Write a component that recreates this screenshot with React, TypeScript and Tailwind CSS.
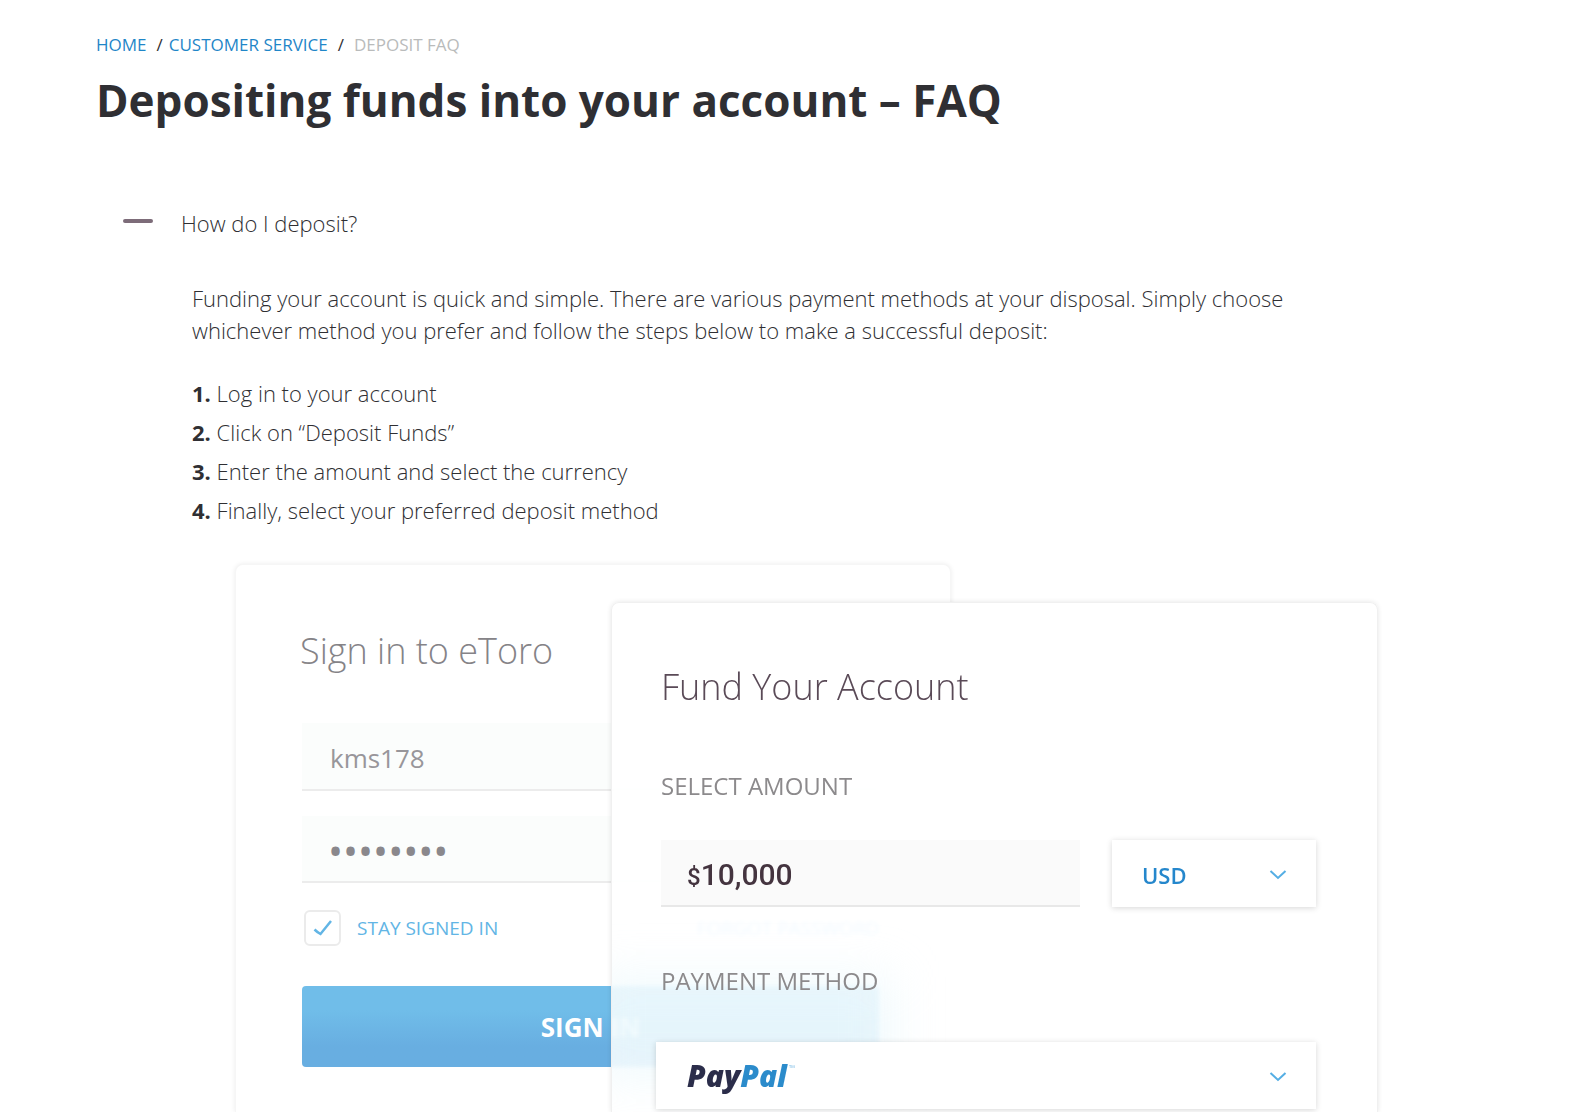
import { useState } from 'react'

const steps = [
  'Log in to your account',
  'Click on “Deposit Funds”',
  'Enter the amount and select the currency',
  'Finally, select your preferred deposit method',
]

function Chevron() {
  return (
    <svg
      className="pointer-events-none absolute top-1/2 right-[29px] -mt-1 h-[10px] w-[18px]"
      viewBox="0 0 18 10"
      fill="none"
      stroke="#55aee4"
      strokeWidth="2"
      aria-hidden="true"
    >
      <path d="M1.5 1 L9 8 L16.5 1" />
    </svg>
  )
}

function SignInCard() {
  return (
    <form className="col-start-1 col-end-3 row-start-1 rounded-t-lg border border-b-0 border-[#f6f6f6] bg-white pt-[58px] pr-[71px] pl-[66px] shadow-[0_0_5px_rgba(0,0,0,0.08)]">
      <h2 className="-ml-[2px] text-[36px] leading-[56px] font-light whitespace-nowrap text-[#858387]">Sign in to eToro</h2>
      <input
        type="text"
        aria-label="Username"
        defaultValue="kms178"
        className="mt-11 block h-[68px] w-full border-b-2 border-[#ececec] bg-[#fbfdfc] px-7 pt-1 text-[26px] text-[#98969a] outline-none"
      />
      <input
        type="password"
        aria-label="Password"
        defaultValue="12345678"
        className="mt-[25px] block h-[67px] w-full border-b-2 border-[#ececec] bg-[#fbfdfc] px-[26px] pt-1 text-[40px] text-[#8a888c] outline-none"
      />
      <div className="mt-[27px] flex items-center justify-between">
        <label className="ml-[2px] flex items-center gap-4 text-[19px] leading-9 whitespace-nowrap text-[#62b5e5]">
          <span className="relative block h-9 w-[37px]">
            <input
              type="checkbox"
              defaultChecked
              className="peer block h-9 w-[37px] appearance-none rounded-md border-2 border-[#ebebeb] bg-white"
            />
            <svg
              className="pointer-events-none absolute top-[9px] left-[9px] hidden h-[18px] w-5 peer-checked:block"
              viewBox="0 0 20 18"
              fill="none"
              stroke="#62b5e5"
              strokeWidth="2.5"
              aria-hidden="true"
            >
              <path d="M1.5 10.5 Q4 13 7.5 15 L18 2" />
            </svg>
          </span>
          STAY SIGNED IN
        </label>
        <a href="#forgot" className="text-[19px] leading-9 whitespace-nowrap text-[#8fccf0]">
          FORGOT PASSWORD
        </a>
      </div>
      <button
        type="button"
        className="mt-10 block h-[81px] w-full rounded-sm bg-linear-to-b from-[#70bde9] from-30% to-[#68aee1] to-75% pt-[2px] text-[26px] font-bold text-white"
      >
        SIGN IN
      </button>
    </form>
  )
}

function FundCard() {
  return (
    <form className="relative col-start-2 col-end-4 row-start-1 mt-[38px] rounded-t-lg border border-b-0 border-[#f0f0f0] bg-white/88 pt-14 pr-[61px] pb-[3px] pl-[49px] shadow-[0_0_5px_rgba(0,0,0,0.1)] backdrop-blur-[2px]">
      {/* Soft glow of the button behind the card */}
      <div className="absolute inset-0 overflow-hidden" aria-hidden="true">
        <div className="absolute bottom-[35px] -left-5 h-[100px] w-[300px] bg-[#d9f3fb]/40 blur-xl" />
      </div>
      <div className="relative">
        <h2 className="text-[36px] leading-[56px] font-light text-[#5a4a57]">Fund Your Account</h2>
        <label htmlFor="amount" className="mt-[53px] block text-[24px] leading-9 text-[#8c8a8c]">
          SELECT AMOUNT
        </label>
        <div className="mt-9 flex gap-8">
          <div className="flex h-[67px] min-w-0 flex-1 items-center border-b-2 border-[#e8e8e8] bg-[#fafafa] pt-1 pl-[26px] font-[Roboto,sans-serif] font-medium text-[#44343f]">
            <span className="pt-1 text-[24px]">$</span>
            <input
              id="amount"
              type="text"
              defaultValue="10,000"
              className="w-full min-w-0 bg-transparent text-[30px] outline-none"
            />
          </div>
          <div className="relative w-[204px]">
            <select
              aria-label="Currency"
              className="h-[67px] w-full appearance-none bg-white px-[30px] pt-1 text-[22px] font-semibold text-[#2587cc] shadow-[0_1px_6px_rgba(0,0,0,0.16)] outline-none"
            >
              <option>USD</option>
            </select>
            <Chevron />
          </div>
        </div>
        <label htmlFor="method" className="mt-14 block text-[24px] leading-9 text-[#8c8a8c]">
          PAYMENT METHOD
        </label>
        <div className="relative mt-[43px] -ml-[5px] bg-white shadow-[0_1px_6px_rgba(0,0,0,0.16)]">
          <select
            id="method"
            className="block h-[67px] w-full appearance-none bg-linear-[102deg] from-[#2b2d4a] from-[90px] to-[#2b8bcb] to-[90px] bg-clip-text px-[31px] text-[30px] font-extrabold text-transparent italic outline-none"
          >
            <option>PayPal</option>
          </select>
          <span className="pointer-events-none absolute top-[22px] left-[133px] text-[8px] leading-none text-[#8cc4e8]">™</span>
          <Chevron />
        </div>
      </div>
    </form>
  )
}

export default function App() {
  const [open, setOpen] = useState(true)

  return (
    <main className="flex min-h-screen flex-col bg-white px-24 pt-[31px] font-['Open_Sans',sans-serif] text-[#2f2f33]">
      <nav aria-label="Breadcrumb" className="flex text-[17px] leading-7">
        <a href="#home" className="text-[#1f86c8]">HOME</a>
        <span className="mr-[6px] ml-[10px]">/</span>
        <a href="#service" className="text-[#1f86c8]">CUSTOMER SERVICE</a>
        <span className="mx-[10px]">/</span>
        <span className="text-[#b9bbbb]">DEPOSIT FAQ</span>
      </nav>

      <h1 className="mt-[9px] text-[44px] leading-[64px] font-bold">Depositing funds into your account – FAQ</h1>

      <button
        type="button"
        aria-expanded={open}
        onClick={() => setOpen(!open)}
        className="mt-[75px] flex items-center gap-7 self-start pl-[27px] text-[22px] leading-8 font-light"
      >
        <span className="-mt-1 h-1 w-[30px] rounded-sm bg-[#7d6c79]" />
        How do I deposit?
      </button>

      {open && (
        <section className="flex flex-1 flex-col">
          <div className="mt-[43px] mr-32 ml-24 text-[22px] leading-8 font-light">
            <p>
              Funding your account is quick and simple. There are various payment methods at your disposal. Simply choose
              whichever method you prefer and follow the steps below to make a successful deposit:
            </p>
            <ol className="mt-7 leading-[39px]">
              {steps.map((step, i) => (
                <li key={step}>
                  <strong className="font-bold">{i + 1}.</strong> {step}
                </li>
              ))}
            </ol>
          </div>

          {/* Overlapping preview cards */}
          <div className="mt-[34px] mr-[109px] ml-[139px] grid flex-1 grid-cols-[376fr_340fr_427fr]">
            <SignInCard />
            <FundCard />
          </div>
        </section>
      )}
    </main>
  )
}
